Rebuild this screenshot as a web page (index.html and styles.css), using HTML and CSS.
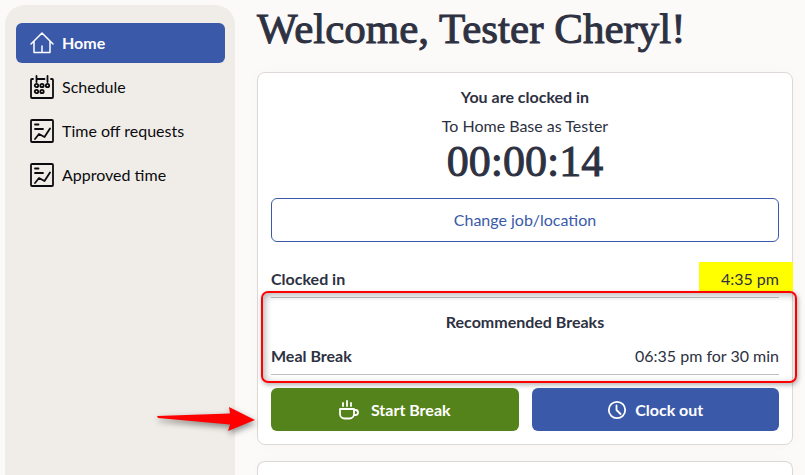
FILE: index.html
```html
<!DOCTYPE html>
<html lang="en">
<head>
    <meta charset="UTF-8">
    <meta name="viewport" content="width=device-width, initial-scale=1.0">
    <title>Time Clock - Home</title>
    <link rel="stylesheet" href="styles.css">
</head>
<body>
    <div class="layout">
        <!-- Sidebar -->
        <nav class="sidebar">
            <a class="nav-item active" href="#">
                <svg class="nav-icon home" viewBox="0 0 24 24">
                    <path d="M1 13 12 2l11 11M4 10.500V21.500h16V10.500M12 21v-6"/>
                </svg>
                Home
            </a>
            <a class="nav-item" href="#">
                <svg class="nav-icon" viewBox="0 0 24 24">
                    <path d="M3 4H2a1 1 0 0 0-1 1v17a1 1 0 0 0 1 1h20a1 1 0 0 0 1-1V5a1 1 0 0 0-1-1h-1M6.500 1v6M17.500 1v6M6.500 4h8"/>
                    <circle cx="6.500" cy="10.500" r="1.700"/>
                    <circle cx="12" cy="10.500" r="1.700"/>
                    <circle cx="17.500" cy="10.500" r="1.700"/>
                    <circle cx="6.500" cy="16.500" r="1.700"/>
                    <circle cx="12" cy="16.500" r="1.700"/>
                </svg>
                Schedule
            </a>
            <a class="nav-item" href="#">
                <svg class="nav-icon" viewBox="0 0 24 24">
                    <rect x="1" y="1" width="22" height="22" rx="1"/>
                    <path d="M5 5.500h3.500M5 10h8M5 20l4-5 5.500 3L20 9.500"/>
                </svg>
                Time off requests
            </a>
            <a class="nav-item" href="#">
                <svg class="nav-icon" viewBox="0 0 24 24">
                    <rect x="1" y="1" width="22" height="22" rx="1"/>
                    <path d="M5 5.500h3.500M5 10h8M5 20l4-5 5.500 3L20 9.500"/>
                </svg>
                Approved time
            </a>
        </nav>

        <!-- Main Content -->
        <main class="content">
            <h1 class="headline">Welcome, Tester Cheryl!</h1>

            <section class="card">
                <h2 class="status-title">You are clocked in</h2>
                <p class="status-text">To Home Base as Tester</p>
                <div class="timer">00:00:14</div>
                <button class="btn btn-outline" type="button">Change job/location</button>

                <div class="row clock-row">
                    <strong>Clocked in</strong>
                    <span class="clock-time">4:35 pm</span>
                </div>

                <div class="breaks">
                    <h2 class="breaks-title">Recommended Breaks</h2>
                    <div class="row">
                        <strong>Meal Break</strong>
                        <span>06:35 pm for 30 min</span>
                    </div>
                    <div class="callout"></div>
                </div>

                <div class="actions">
                    <button class="btn btn-green" type="button">
                        <svg class="btn-icon" viewBox="0 0 20 20">
                            <path d="M1 9h14v5a4.500 4.500 0 0 1-4.500 4.500h-5A4.500 4.500 0 0 1 1 14zM15 10h1.500a2.500 2.500 0 0 1 0 5H15M4 3v3M8 1v5M12 3v3"/>
                        </svg>
                        Start Break
                    </button>
                    <button class="btn btn-blue" type="button">
                        <svg class="btn-icon" viewBox="0 0 20 20">
                            <circle cx="10" cy="10" r="8.200"/>
                            <path d="M9.500 5.500V10l4 4"/>
                        </svg>
                        Clock out
                    </button>
                    <svg class="arrow" viewBox="0 0 100 26">
                        <path d="M1 10 74 7.500 73 1l26 13-27 11 2-6.500L2 12z"/>
                    </svg>
                </div>
            </section>

            <section class="card next-card"></section>
        </main>
    </div>
</body>
</html>
```

FILE: styles.css
```css
* {
    margin: 0;
    padding: 0;
    box-sizing: border-box;
}

body {
    font-family: Lato, 'Open Sans', sans-serif;
    font-size: 16px;
    line-height: 24px;
    background: #FBFAF8;
    color: #2D3142;
}

.layout {
    display: flex;
    gap: 22px;
    min-height: 100vh;
    padding: 5px 12px 0 5px;
}

/* Sidebar */
.sidebar {
    flex: 0 0 230px;
    display: flex;
    flex-direction: column;
    gap: 4px;
    padding: 18px 10px 0 11px;
    background: #F0EDE8;
    border-radius: 20px 20px 0 0;
}

.nav-item {
    display: flex;
    align-items: center;
    gap: 8px;
    height: 40px;
    padding: 0 14px;
    border-radius: 6px;
    color: #0B0B0F;
    text-decoration: none;
}

.nav-item.active {
    background: #3A5AA9;
    color: white;
    font-weight: 700;
}

.nav-icon {
    width: 24px;
    height: 24px;
    fill: none;
    stroke: currentColor;
    stroke-width: 1.8;
    stroke-linecap: round;
    stroke-linejoin: round;
}

.nav-icon.home {
    stroke-width: 1.5;
}

/* Main content */
.content {
    flex: 1;
    min-width: 0;
    display: flex;
    flex-direction: column;
}

.headline,
.timer {
    font-family: 'Liberation Serif', serif;
    font-weight: 400;
    line-height: 48px;
    -webkit-text-stroke: 1px #2D3142;
}

.headline {
    font-size: 43px;
    margin-bottom: 19px;
}

.timer {
    font-size: 44px;
    margin-bottom: 12px;
    text-align: center;
}

.card {
    padding: 12px 13px 13px;
    background: white;
    border: 1px solid #DDD8D6;
    border-radius: 8px;
    box-shadow: 0 0 16px rgba(0, 0, 0, 0.02);
}

.next-card {
    flex: 1;
    margin-top: 16px;
    padding: 0;
    border-bottom: none;
    border-radius: 8px 8px 0 0;
}

.status-title,
.breaks-title {
    font-size: 16px;
    font-weight: 700;
    text-align: center;
}

.status-text {
    margin-top: 5px;
    text-align: center;
}

/* Buttons */
.btn {
    display: flex;
    align-items: center;
    justify-content: center;
    height: 44px;
    width: 100%;
    border: none;
    border-radius: 6px;
    font: inherit;
    color: white;
    cursor: pointer;
}

.btn-outline {
    background: white;
    border: 1px solid #3A5AA9;
    color: #3A5AA9;
}

.actions .btn {
    height: 43px;
    font-weight: 700;
}

.btn-green {
    gap: 12px;
    background: #55831B;
}

.btn-blue {
    gap: 8px;
    background: #3A5AA9;
}

.btn-icon {
    width: 20px;
    height: 20px;
    fill: none;
    stroke: currentColor;
    stroke-width: 1.8;
    stroke-linecap: round;
    stroke-linejoin: round;
}

/* Detail rows */
.row {
    display: flex;
    align-items: flex-start;
    justify-content: space-between;
    height: 36px;
    padding-top: 5px;
    border-bottom: 1px solid #BFBFC1;
}

.clock-row {
    margin-top: 20px;
}

.clock-time {
    margin: -5px -14px 0 0;
    padding: 5px 14px 0 22px;
    background: #FFFF00;
}

.breaks {
    position: relative;
    padding-top: 12px;
}

.breaks-title {
    margin-bottom: 5px;
}

/* Red outline around the recommended breaks */
.callout {
    position: absolute;
    inset: -7px -18px -8px -10px;
    border: 2px solid #FF0000;
    border-radius: 7px;
    box-shadow: 1px 2px 5px rgba(0, 0, 0, 0.3), inset 2px 2px 7px rgba(0, 0, 0, 0.3);
    pointer-events: none;
}

.actions {
    position: relative;
    display: flex;
    gap: 13px;
    margin-top: 13px;
}

/* Arrow pointing at the start break button */
.arrow {
    position: absolute;
    top: 18px;
    left: -115px;
    width: 100px;
    height: 26px;
    overflow: visible;
    fill: #FF0000;
    filter: drop-shadow(1px 3px 3px rgba(0, 0, 0, 0.45));
}
```
